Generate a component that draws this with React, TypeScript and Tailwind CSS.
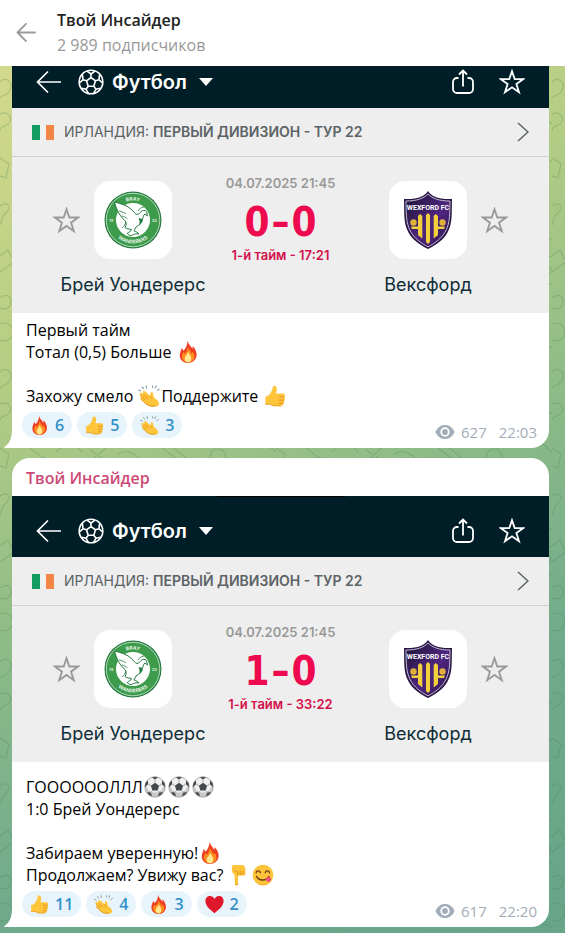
import type { ReactNode } from 'react';
import clsx from 'clsx';

type EmojiName = 'fire' | 'thumb' | 'clap' | 'ball' | 'down' | 'yum' | 'heart';

interface Reaction {
    emoji: EmojiName;
    count: number;
}

interface Match {
    score: [number, number];
    clock: string;
}

const emojiLabels: Record<EmojiName, string> = {
    fire: '🔥',
    thumb: '👍',
    clap: '👏',
    ball: '⚽',
    down: '👇',
    yum: '😋',
    heart: '❤️',
};

const emojiShapes: Record<EmojiName, ReactNode> = {
    fire: (
        <>
            <path d="M11.500 0c.6 3 3.800 5.600 5.200 8.400.5-.9.600-1.900.400-2.900 2.400 2.400 4.300 6 4.300 9.500 0 5-3.900 9-9.200 9S3 20.500 3 15.700c0-3.200 1.500-5.500 2.300-8.200.9.800 1.400 1.800 1.600 3C9.500 8.500 11.300 4.300 11.500 0z" fill="#ee3f24" />
            <path d="M11.800 6c.4 2.700 3.200 4.700 4.200 7.500.5-.4.700-1 .8-1.700 1.300 1.600 2.300 3.300 2.300 5.200 0 3.800-3.200 6.500-6.900 6.500-3.900 0-6.900-2.700-6.900-6.300 0-2 1-3.700 1.600-5.200.6.500 1 1.200 1.100 2 2.300-1.700 3.800-4.700 3.800-8z" fill="#ff8d1f" />
            <path d="M12.200 11.500c.2 2.500 3.400 4 3.400 7.500 0 2.400-1.500 4.300-3.500 4.300s-3.700-1.700-3.700-4c0-2.800 3.400-4.500 3.800-7.800z" fill="#ffe890" />
        </>
    ),
    thumb: (
        <>
            <path d="M1.500 12.500c2.500 0 4.200-1.500 5.500-3.700C8.400 6.400 9.600 5 9.600 2.500c0-1.300.8-1.900 1.800-1.800 1.900.2 2.800 2 2.700 4-.1 1.700-.7 3.200-1 4.500h7.300c1.800 0 2.700 1 2.600 2.100-.1.900-.6 1.400-1.200 1.700.9.400 1.300 1.100 1.200 1.900-.1.900-.7 1.500-1.500 1.700.6.400.9 1.100.7 1.900-.2.800-.8 1.300-1.600 1.400.4.500.5 1 .3 1.600-.3.900-1.100 1.300-2.200 1.300h-6.200c-2.500 0-4.400-.6-5.900-1.800H1.500z" fill="#fec53b" />
            <path d="M22 13h-5M21.500 16.600h-4.700M20.800 19.900h-4" stroke="#dc8b1b" strokeWidth="1" fill="none" strokeLinecap="round" />
            <path d="M1.500 20.900h5.200c1.500 1.200 3.300 1.900 5.900 1.900h6.100" stroke="#e99a20" strokeWidth="1" fill="none" />
        </>
    ),
    clap: (
        <>
            <path d="M2 10.500c-.7-1.600 1-2.800 2.200-1.700l2 1.700-.9-2.200c-.6-1.700 1.200-2.800 2.400-1.500L13.500 12l.3-3c.2-1.700 2.200-1.700 2.500-.1l.8 3.300c.3 1.500 1.100 2.300 2.600 3.300 2 1.300 3.300 3.400 3.300 5.500-.2 1.500-2.200 2.300-4.500 2.500-3.600.4-7-.3-9.700-2.600L3 15.300c-1-1-.3-2.400 1-2.100z" fill="#fec53b" />
            <path d="M2.500 11.500L7.800 16M6 10.500l5 4.500M3.200 15.500l5.600 5.100c2.800 2.300 6.500 2.900 10 2.400" stroke="#df921d" strokeWidth="1" fill="none" strokeLinecap="round" />
            <path d="M13.500 12c.5 1.200.8 2 1.800 3" stroke="#df921d" strokeWidth="1" fill="none" strokeLinecap="round" />
            <path d="M4.500 2l1.500 2M9 .8l.4 2.300M.8 5.500l2 .8M20 1l-1.200 2.200M23.200 4.500l-2 1.300M16 .8v1.800" stroke="#8b979f" strokeWidth="1.200" strokeLinecap="round" />
        </>
    ),
    ball: (
        <>
            <circle cx="12" cy="12" r="11.300" fill="#c9c9c9" />
            <ellipse cx="12" cy="9.500" rx="9.500" ry="8.500" fill="#efefef" />
            <path d="M12 7.300l4.500 3.200-1.700 5.200H9.200l-1.700-5.200zM8.300 1.300C10.500.5 13.500.5 15.700 1.300L12 3.800zM1 9.500c.5-2 1.500-3.600 2.800-5l.9 4.300L1 12.300zM23 9.500c-.5-2-1.500-3.600-2.800-5l-.9 4.300 3.700 3.500zM4.200 17.500l3.300.8 1.300 3.900c-2-.5-4-2-5.200-3.900zM19.800 17.500l-3.300.8-1.300 3.900c2-.5 4-2 5.200-3.900z" fill="#46494c" />
            <path d="M12 3.800v3.500M4.700 8.800l2.800 1.700M19.300 8.800l-2.800 1.700M9.200 15.700l-1.500 2.500M14.800 15.700l1.500 2.500" stroke="#888" strokeWidth=".7" />
            <circle cx="12" cy="12" r="11.200" fill="none" stroke="#8b8b8b" strokeWidth=".6" />
        </>
    ),
    down: (
        <>
            <path d="M5 1h11.500c1.600 1.300 2.500 3 2.500 5.200v5.300c0 1.300-2.200 1.700-2.600.2-.2 1.700-2.800 1.900-3 .1-.2 1.500-2.200 1.500-2.500.4v9.300c0 2.200-3.300 2.200-3.400 0L7.200 12C5.200 10.500 4 8.300 4 5.500z" fill="#fec53b" />
            <path d="M13.400 11.700V7.500M16.400 11.600V7.500M10.900 12V8.500c-2 .2-3.300-.7-3.900-2.400M11 21.500c-.4 1.500-2.500 1.800-3.200.6" stroke="#dc8b1b" strokeWidth="1" fill="none" strokeLinecap="round" />
        </>
    ),
    yum: (
        <>
            <circle cx="12" cy="12" r="11.300" fill="#fdc43a" />
            <path d="M2.500 18c4.500 6 14.500 6.200 19 0a11.300 11.300 0 01-19 0z" fill="#f0951e" />
            <path d="M4.500 9.500c.5-2.600 4-2.600 4.500 0M14.500 9.500c.5-2.600 4-2.600 4.500 0M5 13.500c2.600 5.200 10.500 5.300 13.500 0" stroke="#6e3b12" strokeWidth="1.500" fill="none" strokeLinecap="round" />
            <path d="M14.500 16.500l4-2.800c2.500 1 3.200 3.300 1.700 4.800-1.900 1.700-4.500.7-5.700-2z" fill="#f0517c" />
        </>
    ),
    heart: <path d="M12 23C6 18 .500 13.500.500 7.500.500 3.800 3.200 1.300 6.300 1.300c2.500 0 4.500 1.400 5.700 3.700 1.200-2.300 3.200-3.700 5.700-3.700 3.100 0 5.800 2.500 5.800 6.200C23.500 13.500 18 18 12 23z" fill="#e0182d" />,
};

function Emoji({ name, className }: { name: EmojiName; className?: string }) {
    return (
        <svg viewBox="0 0 24 24" role="img" aria-label={emojiLabels[name]} className={clsx('inline-block shrink-0', className)}>
            {emojiShapes[name]}
        </svg>
    );
}

// Emoji that stands inside a line of message text
function InlineEmoji({ name }: { name: EmojiName }) {
    return <Emoji name={name} className="-my-1 mx-px size-[22px] align-[-1px]" />;
}

function StarIcon({ className }: { className?: string }) {
    return (
        <svg viewBox="0 0 26 26" fill="none" stroke="currentColor" strokeWidth="1.800" className={className} aria-hidden="true">
            <path d="M13 2.200l2.700 7.900h8.500l-6.800 5 2.600 8.200-7-5-7 5 2.600-8.200-6.800-5h8.500z" />
        </svg>
    );
}

function FootballIcon() {
    return (
        <svg viewBox="0 0 26 26" fill="none" stroke="currentColor" strokeWidth="1.600" strokeLinejoin="round" className="size-[26px]" aria-hidden="true">
            <circle cx="13" cy="13" r="11.800" />
            <path d="M13 8.500l4.500 3.300-1.700 5.400h-5.600l-1.700-5.400zM13 8.500V5M17.500 11.800l3.500-1M15.800 17.200l2.200 3M10.200 17.200L8 20.200M8.500 11.800L5 10.800" />
            <path d="M9 2.200L13 5l4-2.800M21 10.800l.5-5M21 10.800l3.700 3.200M18 20.200l4.500-.9M18 20.200l-2.300 4.200M8 20.200l-4.500-.9M8 20.200l2.300 4.200M5 10.800l-.5-5M5 10.800L1.300 14" />
        </svg>
    );
}

function EyeIcon() {
    return (
        <svg viewBox="0 0 20 16" className="h-4 w-5" aria-hidden="true">
            <path d="M10 1C5.500 1 2.200 3.700.500 8c1.700 4.300 5 7 9.500 7s7.800-2.700 9.500-7C17.800 3.700 14.500 1 10 1z" fill="#a3adb8" />
            <circle cx="10" cy="8" r="4.700" fill="#fff" />
            <circle cx="10" cy="8" r="2.900" fill="#a3adb8" />
        </svg>
    );
}

function BrayCrest({ id }: { id: string }) {
    return (
        <svg viewBox="0 0 58 58" className="size-[58px]" role="img" aria-label="Bray Wanderers">
            <defs>
                <path id={`${id}-top`} d="M9.500 29a19.500 19.500 0 0139 0" />
                <path id={`${id}-bottom`} d="M5.500 29a23.500 23.500 0 0047 0" />
            </defs>
            <circle cx="29" cy="29" r="28.500" fill="#237b40" />
            <circle cx="29" cy="29" r="26.800" fill="#3d9b4c" stroke="#d8ecd9" strokeWidth=".8" />
            <circle cx="29" cy="29" r="17" fill="#fff" />
            {/* seagull */}
            <path d="M10.500 11c6 1.500 13 3.500 17 7.500 2 2 3 4 5.500 5 2-.5 3-1.500 4-3 1.500-1.500 4-1.500 5.500 0l1 4.500-2.500-2c-1.500 1-2 3-2.500 5.500-.5 3-3 5.500-6.500 7.500l-2 4c2 .5 4 1.500 5 3-3-.5-5 0-7.500 1.500-2 .5-4-1-4-2.500 1.500-1 3.500-1.500 4-3.500-2-.5-5-.5-6.500-2 1.500-2.500 1.500-4.500 0-7C16 25.500 12.500 19 10.500 11z" fill="#fff" stroke="#237b40" strokeWidth="1" />
            <path d="M34.500 27l4 1c0 3-1.200 5-3.500 6.500 1-2.500.7-5-.5-7.500z" fill="#237b40" />
            <path d="M15 20c3 .5 5 1.500 7 3M18 25c2.500.5 4 1.500 5.500 3M34 20c1-2 3-3.500 6-4M22 31c-1 3-2 4.500-4 6" fill="none" stroke="#237b40" strokeWidth=".8" />
            <text fill="#e4f3e4" className="font-['Inter'] text-[5px] font-bold">
                <textPath href={`#${id}-top`} startOffset="50%" textAnchor="middle">BRAY</textPath>
            </text>
            <text fill="#e4f3e4" className="font-['Inter'] text-[5px] font-bold">
                <textPath href={`#${id}-bottom`} startOffset="50%" textAnchor="middle">WANDERERS</textPath>
            </text>
            <text x="5" y="31" fill="#d8ecd9" className="font-['Inter'] text-[4px] font-bold">19</text>
            <text x="48" y="31" fill="#d8ecd9" className="font-['Inter'] text-[4px] font-bold">22</text>
        </svg>
    );
}

function WexfordCrest({ id }: { id: string }) {
    return (
        <svg viewBox="0 0 50 60" className="h-[60px] w-[50px]" role="img" aria-label="Wexford FC">
            <defs>
                <linearGradient id={id} x1="0" y1="0" x2="1" y2="1">
                    <stop offset="0" stopColor="#1c1433" />
                    <stop offset=".55" stopColor="#4f2680" />
                    <stop offset="1" stopColor="#2f1750" />
                </linearGradient>
            </defs>
            <path d="M25 1c4 6 11 8.500 24 8-.500 12 1 24-4.500 33.500C40.500 50 33 55 25 59 17 55 9.500 50 5.500 42.500 0 33 1.500 21 1 9 14 9.500 21 7 25 1z" fill="#2a1747" />
            <path d="M25 4c4.500 4.700 11.500 7 22 7-.300 11 .4 21.300-4.300 30C39 48 32.500 53 25 56.800 17.500 53 11 48 7.300 41 2.600 32.300 3.300 22 3 11 13.500 11 20.500 8.700 25 4z" fill={`url(#${id})`} stroke="#c5b9d2" strokeWidth="1" />
            <path d="M23 25l2-2 2 2v27l-2 2-2-2zM15 26l2-2 2.300 2v22.500L15 45zM30.700 26l2-2 2.300 2v19l-4.300 3.500zM8 36.500h8v2.500h-7zM34 36.500h8l-1 2.500h-7z" fill="#f4cf3c" />
            <circle cx="10.500" cy="32.500" r="3.200" fill="#e0b13a" />
            <circle cx="39.500" cy="32.500" r="3.200" fill="#e0b13a" />
            <text x="25" y="20" textAnchor="middle" fill="#fff" className="font-['Roboto'] text-[7px] font-bold">WEXFORD FC</text>
        </svg>
    );
}

function TeamBadge({ children }: { children: ReactNode }) {
    return <div className="mt-1.5 flex size-[78px] shrink-0 items-center justify-center rounded-2xl bg-white">{children}</div>;
}

function MatchCard({ id, match }: { id: string; match: Match }) {
    return (
        <section className="bg-[#eeeeee] font-['Inter',sans-serif]">
            {/* App bar */}
            <div className="relative flex h-[61px] items-center bg-[#001e28] px-6 pt-2 text-white">
                <span className="absolute top-0 left-1/2 h-px w-32 -translate-x-1/2 bg-black" />
                <button aria-label="Назад">
                    <svg viewBox="0 0 26 24" fill="none" stroke="currentColor" strokeWidth="1.700" className="h-6 w-[26px]" aria-hidden="true">
                        <path d="M25 12H1.500M12 1.500L1.500 12 12 22.500" />
                    </svg>
                </button>
                <button className="ml-4 flex items-center gap-2 text-xl leading-6 font-semibold">
                    <FootballIcon />
                    Футбол
                    <svg viewBox="0 0 14 8" className="ml-1 h-2 w-3.5 fill-current" aria-hidden="true"><path d="M0 0h14L7 8z" /></svg>
                </button>
                <button className="ml-auto" aria-label="Поделиться">
                    <svg viewBox="0 0 24 26" fill="none" stroke="currentColor" strokeWidth="1.800" className="h-[26px] w-6" aria-hidden="true">
                        <path d="M12 17.500V1.500M8 5.500l4-4 4 4M7.500 9H6a4 4 0 00-4 4v7a4 4 0 004 4h12a4 4 0 004-4v-7a4 4 0 00-4-4h-1.500" />
                    </svg>
                </button>
                <button className="ml-6" aria-label="В избранное"><StarIcon className="size-[26px]" /></button>
            </div>

            {/* League */}
            <a href="#league" className="flex h-[49px] items-center gap-2 border-b border-[#d0d0d0] px-5 text-[#5b6366]">
                <span className="flex h-[15px] w-[22px] shrink-0 bg-[#eff1f0]">
                    <span className="w-2 bg-[#139b62]" />
                    <span className="ml-auto w-2 bg-[#f58545]" />
                </span>
                <span className="ml-0.5 text-sm whitespace-nowrap">
                    ИРЛАНДИЯ: <b className="font-semibold">ПЕРВЫЙ ДИВИЗИОН - ТУР 22</b>
                </span>
                <svg viewBox="0 0 12 20" fill="none" stroke="currentColor" strokeWidth="1.500" className="ml-auto h-5 w-3" aria-hidden="true">
                    <path d="M1 1l10 9-10 9" />
                </svg>
            </a>

            <div className="px-[41px] pt-[18px]">
                <div className="flex items-start text-[#999999]">
                    <button className="mt-8 mr-[14px] shrink-0" aria-label="Следить за Брей Уондерерс"><StarIcon className="size-[27px]" /></button>
                    <TeamBadge><BrayCrest id={`${id}-bray`} /></TeamBadge>
                    <div className="flex flex-1 flex-col items-center">
                        <span className="text-[13px] leading-4 font-semibold">04.07.2025 21:45</span>
                        <div className="mt-1.5 flex items-center gap-0.5 font-['DejaVu_Sans_Condensed','DejaVu_Sans',sans-serif] text-[40px] leading-[50px] font-bold text-[#ee0a4f]">
                            <span>{match.score[0]}</span>
                            <span>–</span>
                            <span>{match.score[1]}</span>
                        </div>
                        <span className="text-[13px] leading-4 font-semibold text-[#d3104c]">1-й тайм - {match.clock}</span>
                    </div>
                    <TeamBadge><WexfordCrest id={`${id}-wexford`} /></TeamBadge>
                    <button className="mt-8 ml-[14px] shrink-0" aria-label="Следить за Вексфорд"><StarIcon className="size-[27px]" /></button>
                </div>
                <div className="flex justify-between pt-2 pb-3.5 text-center text-lg leading-7 text-[#0f2d37]">
                    <span className="w-40 whitespace-nowrap">Брей Уондерерс</span>
                    <span className="w-40 whitespace-nowrap">Вексфорд</span>
                </div>
            </div>
        </section>
    );
}

interface PostProps {
    id: string;
    author?: string;
    match: Match;
    reactions: Reaction[];
    views: number;
    time: string;
    className?: string;
    children: ReactNode;
}

function Post({ id, author, match, reactions, views, time, className, children }: PostProps) {
    return (
        <article className="relative shrink-0 rounded-t-[18px] rounded-br-[18px] bg-white">
            {/* Bubble tail */}
            <svg viewBox="0 0 8 18" className="absolute bottom-0 -left-2 h-[18px] w-2 fill-white" aria-hidden="true">
                <path d="M8 0v18H1c-.8 0-1-.8-.3-1.200C5.500 13.500 8 8 8 0z" />
            </svg>
            {author && <h2 className="px-3.5 pt-2 pb-1.5 text-base leading-6 font-semibold text-[#cc4a76]">{author}</h2>}
            <MatchCard id={id} match={match} />
            <div className={clsx('px-3.5 text-base leading-[22px] text-black', className)}>{children}</div>
            <footer className="flex items-end justify-between pt-[5px] pr-3 pb-1 pl-2.5">
                <div className="mb-1.5 flex gap-[5px]">
                    {reactions.map((r) => (
                        <button key={r.emoji} className="flex h-[26px] items-center gap-1.5 rounded-full bg-[#e8f4fc] px-2 text-base font-semibold text-[#3390c8]">
                            <Emoji name={r.emoji} className="size-[19px]" />
                            {r.count}
                        </button>
                    ))}
                </div>
                <div className="flex items-center gap-1.5 text-[15px] leading-6 text-[#a3adb8]">
                    <EyeIcon />
                    <span>{views}</span>
                    <time className="ml-1.5">{time}</time>
                </div>
            </footer>
        </article>
    );
}

// Chat wallpaper: line doodles over the gradient
function Wallpaper() {
    return (
        <svg className="absolute inset-0 size-full" aria-hidden="true">
            <defs>
                <pattern id="doodles" width="276" height="290" patternUnits="userSpaceOnUse">
                    <g fill="none" stroke="#3f7a4a" strokeOpacity=".25" strokeWidth="1.200">
                        <path d="M0 16c6-6 14 0 10 8s-8 4-10 8M0 48c8-4 13 4 9 9s-9 2-9 8M0 92l9 6-3 14-6-2M0 140c8-6 12 2 6 7s-4 9-6 12M0 190l8-6 6 12-14 10M0 232c7-5 11-2 11 4s-6 8-11 6" />
                        <circle cx="4" cy="266" r="9" />
                        <path d="M268 20c-10-4-14 2-14 8s6 12 20 8M276 58c-8-8-16-2-20 2M262 84c6 2 8 9 14 12M256 118c8-8 15-3 14 5s-8 4-12 10M262 160c-6 6 0 14 8 10l6 4" />
                        <circle cx="272" cy="204" r="14" />
                        <circle cx="270" cy="204" r="5" />
                        <path d="M258 240l12 8-4 14-8-4zM260 276c6 4 10 0 16 6" />
                        <path d="M30 92c8 6 16 14 24 10M56 96l14-12 12 12M90 94l18 12M92 104l14-12M118 98c10-6 18 0 24 8M160 90l20 16M166 86l20 16M210 102c0-12 16-12 16 0" />
                    </g>
                </pattern>
            </defs>
            <rect width="100%" height="100%" fill="url(#doodles)" />
        </svg>
    );
}

export default function App() {
    return (
        <div className="flex h-screen flex-col overflow-hidden font-['Open_Sans','Noto_Sans',sans-serif]">
            <header className="flex shrink-0 items-center gap-5 bg-white px-4 pt-2 pb-2">
                <button className="text-[#999999]" aria-label="Назад">
                    <svg viewBox="0 0 21 20" fill="none" stroke="currentColor" strokeWidth="1.800" strokeLinecap="round" strokeLinejoin="round" className="h-5 w-[21px]" aria-hidden="true">
                        <path d="M19 9.500H1.500M10 .900L1.500 9.500l8.500 8.600" />
                    </svg>
                </button>
                <div>
                    <h1 className="text-base leading-6 font-semibold text-[#222222]">Твой Инсайдер</h1>
                    <p className="text-base leading-[26px] text-[#999999]">2 989 подписчиков</p>
                </div>
            </header>

            {/* The feed is pinned to its last post */}
            <main className="relative flex min-h-0 flex-1 flex-col justify-end overflow-hidden bg-linear-[155deg,#d3d98c_0%,#b4cd84_28%,#8cba88_53%,#6faa8b_75%,#68a488_100%]">
                <Wallpaper />
                <div className="relative flex shrink-0 flex-col gap-2.5 pr-4 pb-1.5 pl-3">
                    <Post
                        id="first"
                        match={{ score: [0, 0], clock: '17:21' }}
                        reactions={[{ emoji: 'fire', count: 6 }, { emoji: 'thumb', count: 5 }, { emoji: 'clap', count: 3 }]}
                        views={627}
                        time="22:03"
                        className="pt-1.5"
                    >
                        <p>Первый тайм</p>
                        <p>Тотал (0,5) Больше <InlineEmoji name="fire" /></p>
                        <p className="mt-[22px]">Захожу смело <InlineEmoji name="clap" />Поддержите <InlineEmoji name="thumb" /></p>
                    </Post>
                    <Post
                        id="second"
                        author="Твой Инсайдер"
                        match={{ score: [1, 0], clock: '33:22' }}
                        reactions={[{ emoji: 'thumb', count: 11 }, { emoji: 'clap', count: 4 }, { emoji: 'fire', count: 3 }, { emoji: 'heart', count: 2 }]}
                        views={617}
                        time="22:20"
                        className="pt-3.5"
                    >
                        <p>ГООООООЛЛЛ<InlineEmoji name="ball" /><InlineEmoji name="ball" /><InlineEmoji name="ball" /></p>
                        <p>1:0 Брей Уондерерс</p>
                        <p className="mt-[22px]">Забираем уверенную!<InlineEmoji name="fire" /></p>
                        <p>Продолжаем? Увижу вас? <InlineEmoji name="down" /><InlineEmoji name="yum" /></p>
                    </Post>
                </div>
            </main>
        </div>
    );
}
